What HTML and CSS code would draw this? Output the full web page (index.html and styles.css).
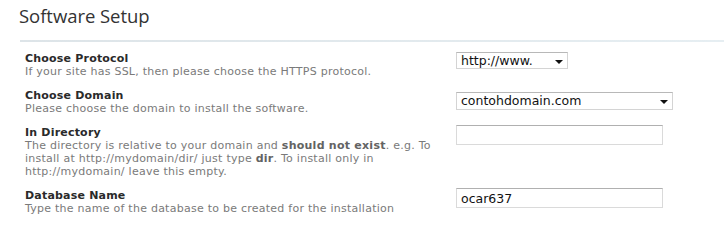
FILE: index.html
```html
<!DOCTYPE html>
<html>
<head>
<meta charset="utf-8">
<link rel="stylesheet" href="styles.css">
</head>
<body>
<h1 class="title">Software Setup</h1>
<div class="rule"></div>
<div class="form">
  <div class="row">
    <div class="info">
      <div class="label">Choose Protocol</div>
      <div class="desc">If your site has SSL, then please choose the HTTPS protocol.</div>
    </div>
    <div class="ctrl ctrl-proto">
      <span class="sel sel-proto"><select><option>http://www.</option></select></span>
    </div>
  </div>
  <div class="row">
    <div class="info">
      <div class="label">Choose Domain</div>
      <div class="desc">Please choose the domain to install the software.</div>
    </div>
    <div class="ctrl ctrl-domain">
      <span class="sel sel-domain"><select><option>contohdomain.com</option></select></span>
    </div>
  </div>
  <div class="row">
    <div class="info">
      <div class="label">In Directory</div>
      <div class="desc">The directory is relative to your domain and <b class="em">should not exist</b>. e.g. To install at http://mydomain/dir/ just type <b class="em">dir</b>. To install only in http://mydomain/ leave this empty.</div>
    </div>
    <div class="ctrl ctrl-dir">
      <input class="field" type="text" value="">
    </div>
  </div>
  <div class="row">
    <div class="info">
      <div class="label">Database Name</div>
      <div class="desc">Type the name of the database to be created for the installation</div>
    </div>
    <div class="ctrl ctrl-db">
      <input class="field" type="text" value="ocar637">
    </div>
  </div>
</div>
</body>
</html>
```
FILE: styles.css
```css
html, body {
  margin: 0;
  padding: 0;
  background: #ffffff;
}
body {
  font-family: "DejaVu Sans", Verdana, sans-serif;
  font-size: 11px;
  line-height: 13px;
  letter-spacing: 0.25px;
  color: #222;
  width: 724px;
  height: 238px;
  overflow: hidden;
}
.title {
  margin: 0;
  padding: 4px 0 0 19px;
  height: 31px;
  box-sizing: border-box;
  font-family: "Open Sans", "DejaVu Sans", sans-serif;
  font-size: 18.5px;
  line-height: 24px;
  font-weight: normal;
  color: #333;
  letter-spacing: -0.05px;
}
.rule {
  margin: 9px 0 0 20px;
  height: 2px;
  background: linear-gradient(to right, #dde4e8, #e6eef2);
}
.form {
  padding: 10px 0 0 25px;
  display: flex;
  flex-direction: column;
  gap: 11px;
}
.row {
  display: grid;
  grid-template-columns: 431px 1fr;
  align-items: start;
}
.label {
  font-weight: bold;
  color: #2a2a2a;
  letter-spacing: 0.2px;
}
.desc {
  color: #7a7a7a;
  width: 425px;
}
.em {
  color: #636363;
}
.ctrl-proto {
  margin-top: 0;
}
.ctrl-domain {
  margin-top: 3px;
}
.ctrl-dir {
  margin-top: -1px;
}
.ctrl-db {
  margin-top: -1px;
}
.sel {
  position: relative;
  display: inline-block;
}
.sel select {
  appearance: none;
  -webkit-appearance: none;
  font-family: "DejaVu Sans", Verdana, sans-serif;
  font-size: 12.5px;
  letter-spacing: 0;
  color: #111;
  background: #fff;
  border: 1px solid #d4d4d4;
  border-top-color: #b8b8b8;
  border-radius: 0;
  padding: 0 0 0 4px;
  margin: 0;
  box-sizing: border-box;
  outline: none;
  display: block;
}
.sel-proto select {
  width: 112px;
  height: 17px;
  line-height: 15px;
}
.sel-domain select {
  width: 217px;
  height: 18px;
  line-height: 16px;
}
.sel::after {
  content: "";
  position: absolute;
  right: 5px;
  top: 50%;
  margin-top: -1px;
  border-left: 4px solid transparent;
  border-right: 4px solid transparent;
  border-top: 4px solid #111;
}
.field {
  display: block;
  width: 207px;
  height: 20px;
  box-sizing: border-box;
  border: 1px solid #dadada;
  border-top-color: #b0b0b0;
  border-radius: 0;
  padding: 0 0 0 4px;
  margin: 0;
  font-family: "DejaVu Sans", Verdana, sans-serif;
  font-size: 12.5px;
  letter-spacing: 0;
  color: #111;
  outline: none;
}
```
